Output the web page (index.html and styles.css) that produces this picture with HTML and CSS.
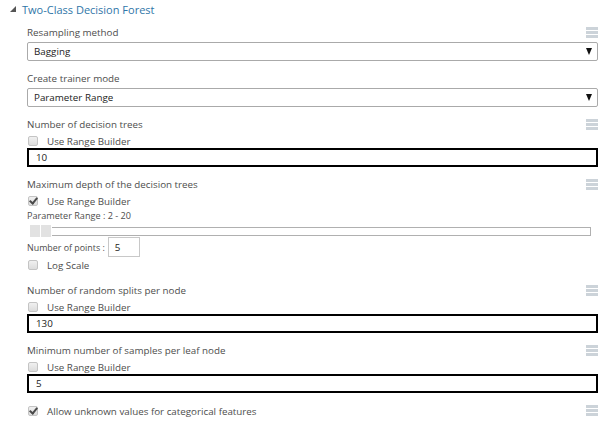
FILE: index.html
```html
<!DOCTYPE html>
<html lang="en">
  <head>
    <meta charset="UTF-8" />
    <title>Two-Class Decision Forest</title>
    <link rel="stylesheet" href="styles.css">
  </head>
  <body>
    <div class="panel">
      <div class="panel-title"><span class="caret"></span>Two-Class Decision Forest</div>

      <div class="field">
        <div class="field-label">Resampling method<span class="grip"></span></div>
        <div class="select">Bagging<span class="arrow"></span></div>
      </div>

      <div class="field">
        <div class="field-label">Create trainer mode</div>
        <div class="select">Parameter Range<span class="arrow"></span></div>
      </div>

      <div class="field">
        <div class="field-label">Number of decision trees<span class="grip"></span></div>
        <label class="check"><span class="box"></span>Use Range Builder</label>
        <div class="textbox">10</div>
      </div>

      <div class="field">
        <div class="field-label">Maximum depth of the decision trees<span class="grip"></span></div>
        <label class="check"><span class="box checked"></span>Use Range Builder</label>
        <div class="range-caption">Parameter Range : 2 - 20</div>
        <div class="slider">
          <span class="knob"></span><span class="knob"></span>
          <span class="track"></span>
        </div>
        <div class="points">Number of points :<span class="points-input">5</span></div>
        <label class="check tall"><span class="box"></span>Log Scale</label>
      </div>

      <div class="field">
        <div class="field-label">Number of random splits per node<span class="grip"></span></div>
        <label class="check"><span class="box"></span>Use Range Builder</label>
        <div class="textbox">130</div>
      </div>

      <div class="field">
        <div class="field-label">Minimum number of samples per leaf node<span class="grip"></span></div>
        <label class="check"><span class="box"></span>Use Range Builder</label>
        <div class="textbox">5</div>
      </div>

      <div class="field">
        <div class="field-label"><label class="check"><span class="box checked"></span>Allow unknown values for categorical features</label><span class="grip"></span></div>
      </div>
    </div>
  </body>
</html>
```

FILE: styles.css
```css
body {
  margin: 0;
  background: #fff;
  font-family: "Open Sans", sans-serif;
  font-size: 9.8px;
  color: #4d4d4d;
}
.panel {
  width: 598px;
}
.panel-title {
  display: flex;
  align-items: center;
  height: 18px;
  padding-left: 10px;
  font-size: 11px;
  color: #2f76a8;
}
.caret {
  width: 0;
  height: 0;
  margin-right: 6px;
  border-left: 6px solid transparent;
  border-bottom: 6px solid #555;
}
.field {
  padding-left: 27px;
  margin-top: 6px;
}
.field + .field {
  margin-top: 9px;
}
.field-label {
  display: flex;
  align-items: center;
  justify-content: space-between;
  height: 17px;
}
.grip {
  width: 12px;
  height: 11px;
  background: linear-gradient(#ccd3d9 0 3px, transparent 3px 4px, #ccd3d9 4px 7px, transparent 7px 8px, #ccd3d9 8px 11px);
}
.select {
  position: relative;
  display: flex;
  align-items: center;
  height: 17px;
  margin-top: 1px;
  padding-left: 6px;
  border: 1px solid #aaa;
  border-radius: 2px;
  color: #222;
}
.arrow {
  position: absolute;
  right: 5px;
  top: 5px;
  width: 0;
  height: 0;
  border-left: 3.5px solid transparent;
  border-right: 3.5px solid transparent;
  border-top: 7px solid #111;
}
.check {
  display: flex;
  align-items: center;
  height: 15px;
  padding-top: 1px;
  box-sizing: border-box;
}
.check.tall {
  height: 16px;
}
.box {
  position: relative;
  width: 8px;
  height: 8px;
  margin: -1px 9px 0 1px;
  border: 1px solid #c4c4c4;
  border-radius: 2px;
  background: linear-gradient(#f0f0f0, #dcdcdc);
}
.box.checked::after {
  content: "";
  position: absolute;
  left: 2px;
  top: -1px;
  width: 3px;
  height: 6px;
  border: solid #4a4a4a;
  border-width: 0 2px 2px 0;
  transform: rotate(40deg);
}
.textbox {
  display: flex;
  align-items: center;
  height: 15px;
  padding-left: 7px;
  border: 2px solid #000;
  color: #222;
}
.range-caption {
  height: 14px;
  margin-top: 1px;
  line-height: 14px;
  font-size: 9.1px;
}
.slider {
  display: flex;
  align-items: center;
  height: 12px;
  margin-top: 2px;
  padding-left: 3px;
  padding-right: 7px;
}
.knob {
  width: 10px;
  height: 12px;
  background: #e2e2e2;
  border-right: 1px solid #fff;
}
.track {
  flex: 1;
  height: 7px;
  border: 1px solid #b0b0b0;
  border-left: 0;
}
.points {
  display: flex;
  align-items: center;
  height: 20px;
  font-size: 8.9px;
}
.points-input {
  display: flex;
  align-items: center;
  width: 24px;
  height: 18px;
  margin-left: 3px;
  padding-left: 6px;
  border: 1px solid #c8c8c8;
  font-size: 9.8px;
  color: #222;
}
```
